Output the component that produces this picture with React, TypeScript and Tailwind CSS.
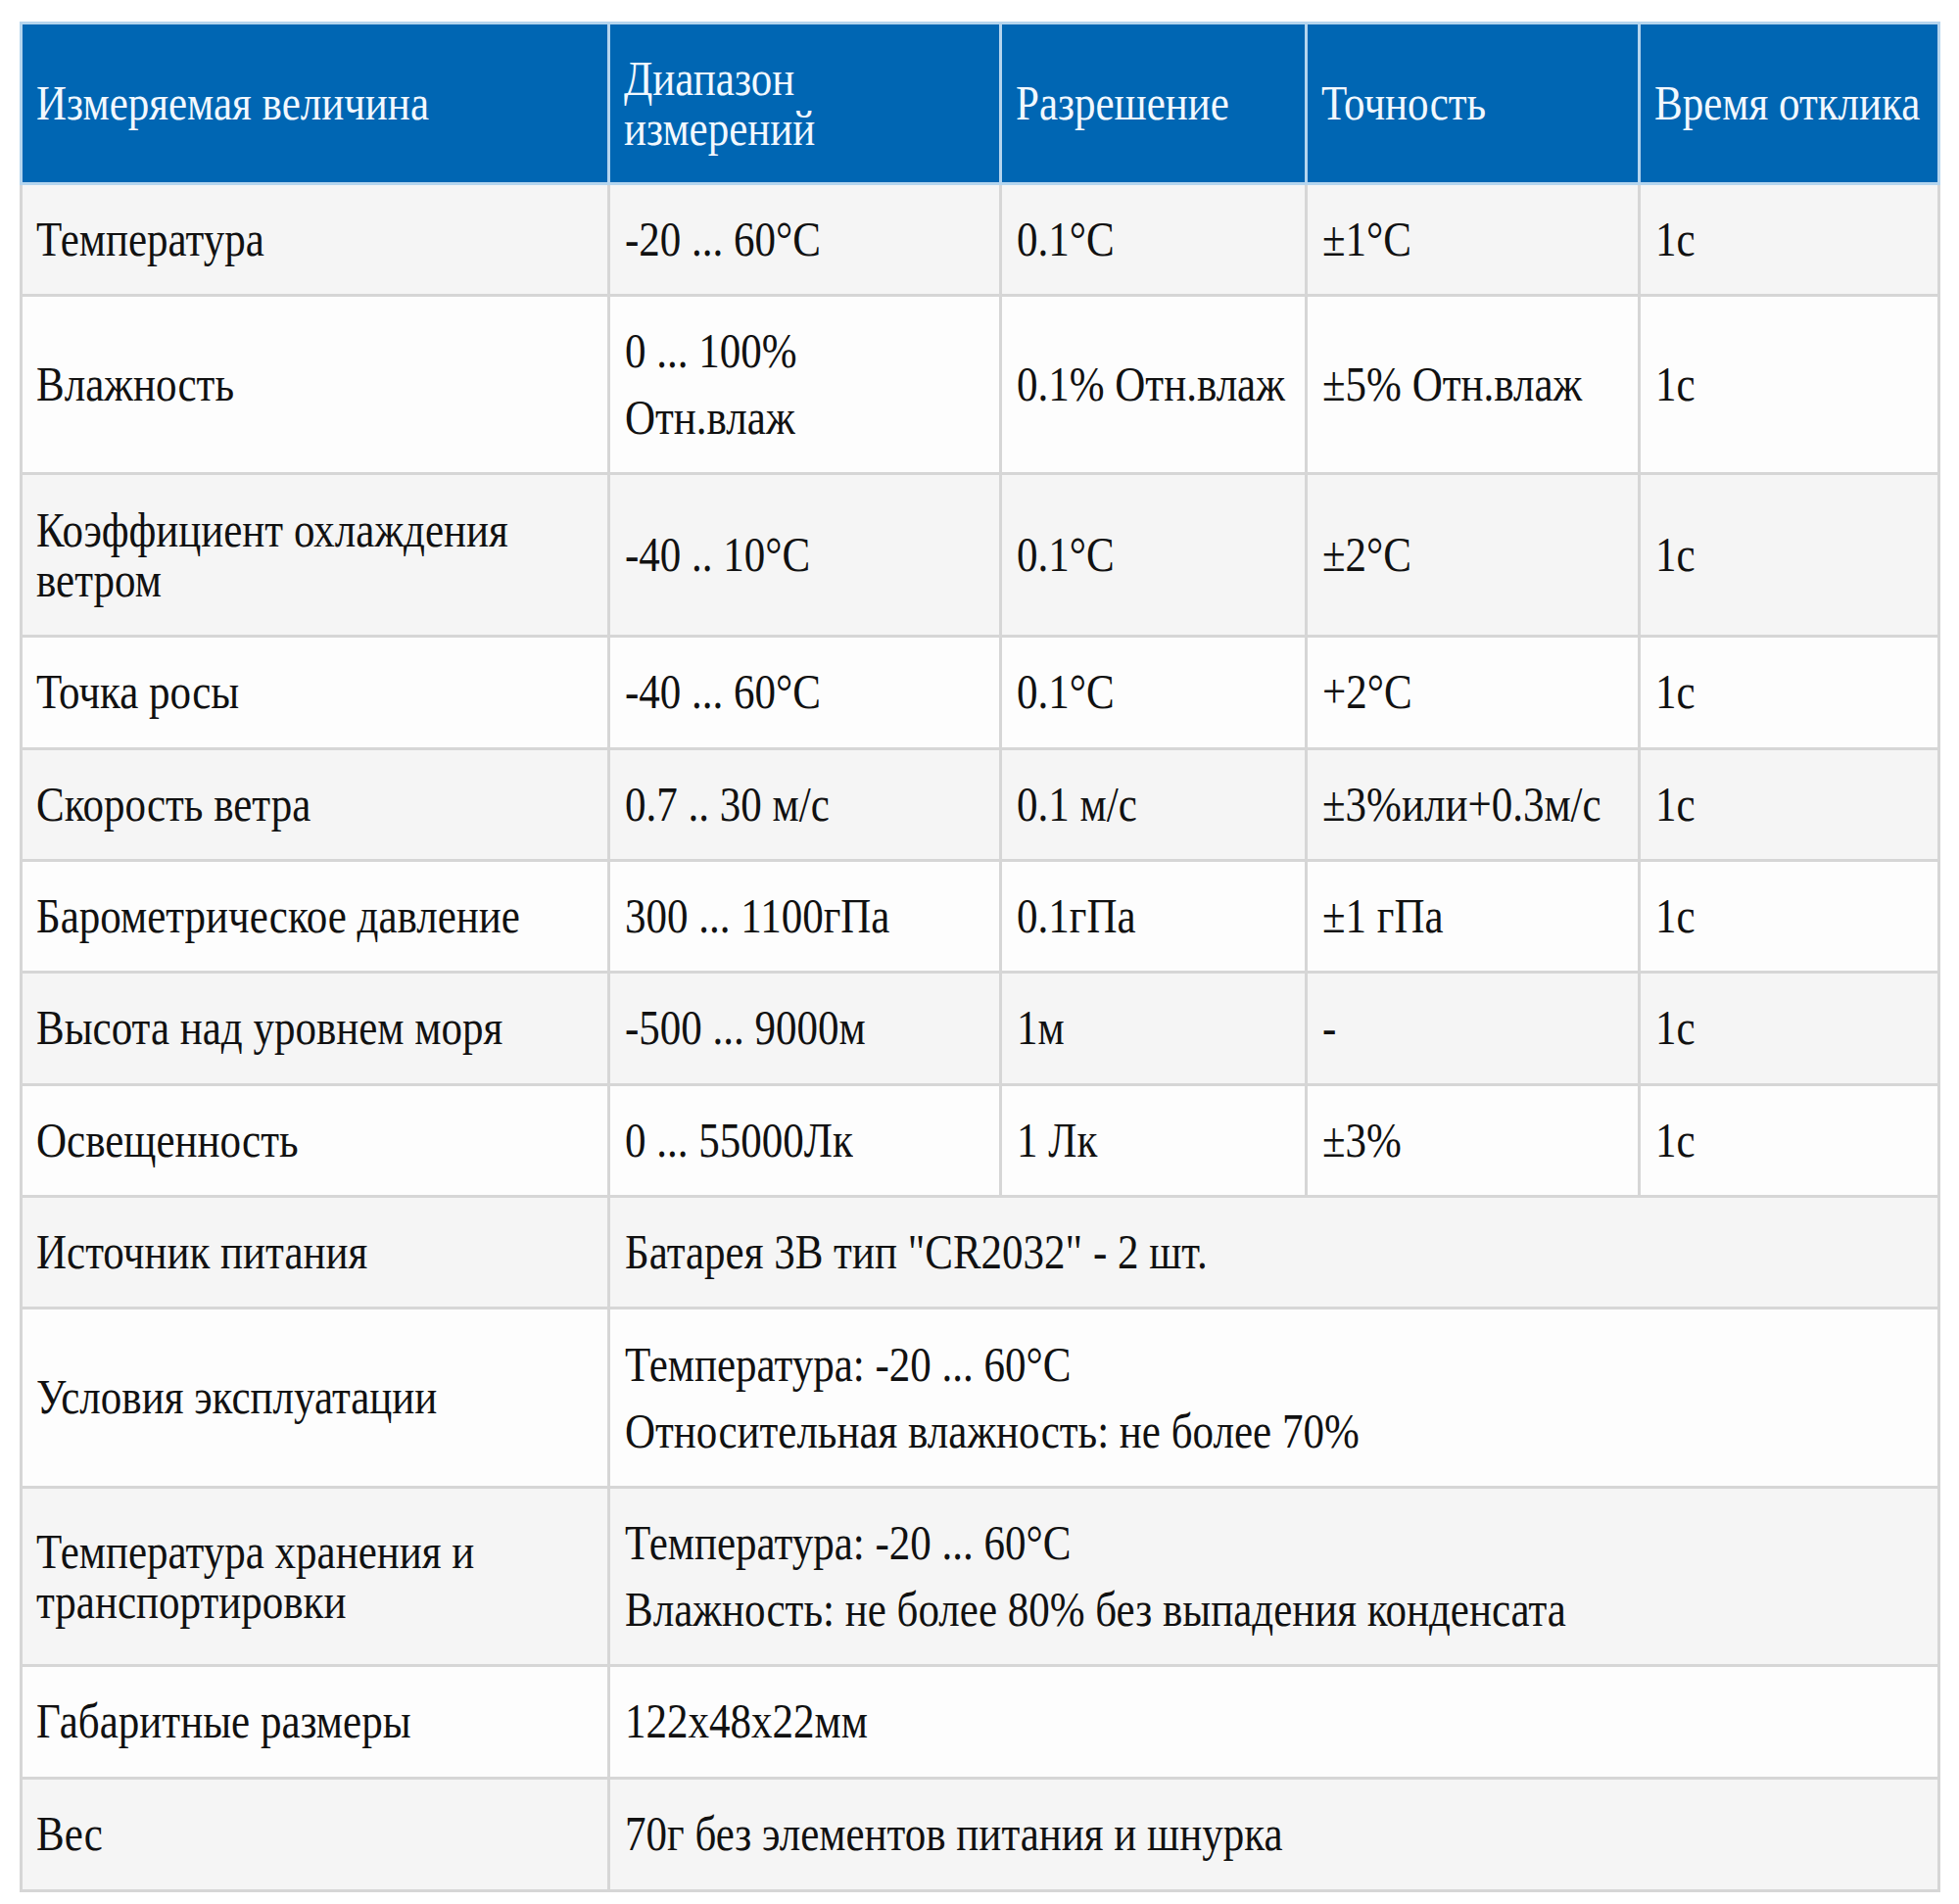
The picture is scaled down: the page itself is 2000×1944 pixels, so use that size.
import React from 'react';

type Row = {
  label: string;
  cells: (string | string[])[];
  h: string;
};

const head: (string | string[])[] = ['Измеряемая величина', ['Диапазон', 'измерений'], 'Разрешение', 'Точность', 'Время отклика'];

const rows: Row[] = [
  { label: 'Температура', cells: ['-20 ... 60°C', '0.1°C', '±1°C', '1с'], h: 'h-[114px]' },
  { label: 'Влажность', cells: [['0 ... 100%', 'Отн.влаж'], '0.1% Отн.влаж', '±5% Отн.влаж', '1с'], h: 'h-[182px]' },
  { label: 'Коэффициент охлаждения ветром', cells: ['-40 .. 10°C', '0.1°C', '±2°C', '1с'], h: 'h-[166px]' },
  { label: 'Точка росы', cells: ['-40 ... 60°C', '0.1°C', '+2°C', '1с'], h: 'h-[115px]' },
  { label: 'Скорость ветра', cells: ['0.7 .. 30 м/с', '0.1 м/с', '±3%или+0.3м/с', '1с'], h: 'h-[114px]' },
  { label: 'Барометрическое давление', cells: ['300 ... 1100гПа', '0.1гПа', '±1 гПа', '1с'], h: 'h-[114px]' },
  { label: 'Высота над уровнем моря', cells: ['-500 ... 9000м', '1м', '-', '1с'], h: 'h-[115px]' },
  { label: 'Освещенность', cells: ['0 ... 55000Лк', '1 Лк', '±3%', '1с'], h: 'h-[114px]' },
  { label: 'Источник питания', cells: ['Батарея 3В тип "CR2032" - 2 шт.'], h: 'h-[114px]' },
  { label: 'Условия эксплуатации', cells: [['Температура: -20 ... 60°C', 'Относительная влажность: не более 70%']], h: 'h-[183px]' },
  { label: 'Температура хранения и транспортировки', cells: [['Температура: -20 ... 60°C', 'Влажность: не более 80% без выпадения конденсата']], h: 'h-[182px]' },
  { label: 'Габаритные размеры', cells: ['122x48x22мм'], h: 'h-[115px]' },
  { label: 'Вес', cells: ['70г без элементов питания и шнурка'], h: 'h-[115px]' },
];

// text in the shot is a bit stretched vertically
function Txt({ v, tight = false }: { v: string | string[]; tight?: boolean }) {
  if (Array.isArray(v)) {
    return (
      <div className="block origin-left scale-y-[1.16]">
        {v.map((p, i) => (
          <p key={i} className={i > 0 && !tight ? 'mt-[15px]' : ''}>{p}</p>
        ))}
      </div>
    );
  }
  return <div className="block origin-left scale-y-[1.16]">{v}</div>;
}

export default function App() {
  return (
    <div className="min-h-screen bg-white pl-[20px] pt-[22px] font-['Liberation_Serif'] text-[43px] leading-[44px] text-[#111]">
      <table className="w-[1958px] table-fixed border-collapse">
        <colgroup>
          <col className="w-[600px]" />
          <col className="w-[400px]" />
          <col className="w-[312px]" />
          <col className="w-[340px]" />
          <col className="w-[306px]" />
        </colgroup>
        <thead>
          <tr className="h-[164px] bg-[#0066b3]">
            {head.map((h, i) => (
              <th
                key={i}
                className="border-[3px] border-[#b5d5ee] pl-[14px] pr-[4px] text-left align-middle font-normal whitespace-nowrap text-[#f2f8fe]"
              >
                <Txt v={h} tight />
              </th>
            ))}
          </tr>
        </thead>
        <tbody>
          {rows.map((r, i) => (
            <tr key={i} className={`${r.h} ${i % 2 === 0 ? 'bg-[#f5f5f5]' : 'bg-[#fdfdfd]'}`}>
              <td className="border-[3px] border-[#d6d6d6] pl-[14px] pr-[10px] align-middle">
                <Txt v={r.label} />
              </td>
              {r.cells.length === 1 ? (
                <td colSpan={4} className="border-[3px] border-[#d6d6d6] pl-[15px] pr-[10px] align-middle">
                  <Txt v={r.cells[0]} />
                </td>
              ) : (
                r.cells.map((c, j) => (
                  <td key={j} className="border-[3px] border-[#d6d6d6] pl-[15px] pr-[4px] align-middle whitespace-nowrap">
                    <Txt v={c} />
                  </td>
                ))
              )}
            </tr>
          ))}
        </tbody>
      </table>
    </div>
  );
}
